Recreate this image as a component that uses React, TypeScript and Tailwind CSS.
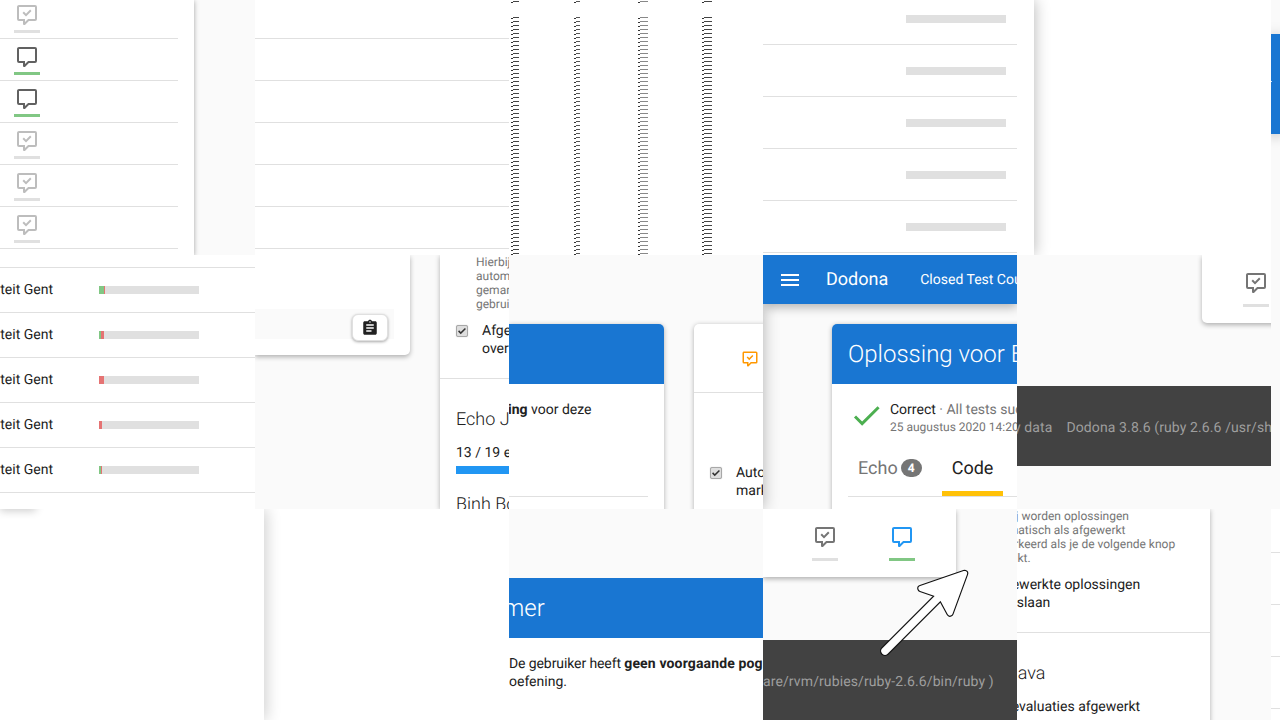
const checkPath =
  "M9,22A1,1 0 0,1 8,21V18H4A2,2 0 0,1 2,16V4C2,2.89 2.9,2 4,2H20A2,2 0 0,1 22,4V16A2,2 0 0,1 20,18H13.9L10.2,21.71C10,21.9 9.75,22 9.5,22V22H9M10,16V19.08L13.08,16H20V4H4V16H10M16.5,8L11,13.5L7.5,10L8.91,8.59L11,10.67L15.09,6.59L16.5,8Z";
const plainPath =
  "M9,22A1,1 0 0,1 8,21V18H4A2,2 0 0,1 2,16V4C2,2.89 2.9,2 4,2H20A2,2 0 0,1 22,4V16A2,2 0 0,1 20,18H13.9L10.2,21.71C10,21.9 9.75,22 9.5,22V22H9M10,16V19.08L13.08,16H20V4H4V16H10Z";

function CommentIcon({ done, className }: { done?: boolean; className: string }) {
  return (
    <svg viewBox="0 0 24 24" fill="currentColor" className={className}>
      <path d={done ? checkPath : plainPath} />
    </svg>
  );
}

function Checkbox() {
  return (
    <span className="flex h-3 w-3 shrink-0 items-center justify-center rounded-[2px] border border-[#a8a8a8] bg-[#dedede] shadow-[0_0_1px_rgba(0,0,0,0.3)]">
      <svg viewBox="0 0 24 24" fill="#333" className="h-[10px] w-[10px]">
        <path d="M9 19.5L2.5 13l2.6-2.6L9 14.3 18.9 4.5l2.6 2.6z" />
      </svg>
    </span>
  );
}

// crushed text from the reference, one mark every 4px
const squiggleRows = [1, ...Array.from({ length: 60 }, (_, i) => 17 + i * 4)];

function Squiggle({ w, tone }: { w: number; tone: string }) {
  return (
    <svg width={w} height={255} className="shrink-0">
      {squiggleRows.map((y) => (
        <g key={y}>
          <rect x={0} y={y + 1} width={2} height={1} fill="#333" />
          <rect x={2} y={y} width={w - 2} height={1} fill={tone} />
        </g>
      ))}
    </svg>
  );
}

const reviewRows = [false, true, true, false, false, false];
const scoreRows = [
  { green: 5, red: 1 },
  { green: 2, red: 3 },
  { green: 0, red: 5 },
  { green: 0, red: 3 },
  { green: 2.4, red: 0.6 },
];

function SettingsCard({ className }: { className: string }) {
  return (
    <div className={`h-[254px] w-[262px] shrink-0 bg-white whitespace-nowrap shadow-[0_1px_5px_rgba(0,0,0,0.3)] ${className}`}>
      <div className="pl-9 text-xs leading-[14px] text-[#757575]">
        <div>Hierbij worden oplossingen</div>
        <div>automatisch als afgewerkt</div>
        <div>gemarkeerd als je de volgende knop</div>
        <div>gebruikt.</div>
      </div>
      <div className="mt-[10px] flex h-[58px] gap-[14px] border-b border-[#e0e0e0] pl-4 text-sm leading-[18px] text-[#212121]">
        <div className="pt-1">
          <Checkbox />
        </div>
        <div className="pt-px">
          <div>Afgewerkte oplossingen</div>
          <div>overslaan</div>
        </div>
      </div>
      <div className="mt-[29px] pl-4 text-[18px] leading-6 font-light text-[#212121]">Echo Java</div>
      <div className="mt-3 pl-4 text-sm leading-[18px] text-[#212121]">13 / 19 evaluaties afgewerkt</div>
      <div className="mt-1 ml-4 h-2 w-[230px] bg-[#2196f3]" />
      <div className="mt-[19px] pl-4 text-[18px] leading-6 font-light text-[#212121]">Binh Bo</div>
    </div>
  );
}

function App() {
  return (
    <div className="grid h-[720px] w-[1280px] grid-cols-[255px_254px_254px_254px_254px_9px] grid-rows-[255px_254px_211px] overflow-hidden bg-white font-[Roboto,sans-serif] text-[#212121] [text-rendering:geometricPrecision]">
      {/* row 1 */}
      <div className="flex overflow-hidden bg-[#fafafa]">
        <div className="h-full w-[194px] bg-white shadow-[0_1px_5px_rgba(0,0,0,0.35)]">
          <div className="-mt-[3px] w-[178px]">
            {reviewRows.map((active, i) => (
              <div key={i} className="flex h-[42px] flex-col border-b border-[#e0e0e0] pt-[6px] pl-[14px]">
                <CommentIcon
                  done={!active}
                  className={`ml-[1px] h-6 w-6 ${active ? "text-[#616161]" : "text-[#bdbdbd]"}`}
                />
                <div className={`mt-[3px] h-[3px] w-[26px] ${active ? "bg-[#81c784]" : "bg-[#e0e0e0]"}`} />
              </div>
            ))}
          </div>
        </div>
      </div>

      <div className="overflow-hidden bg-white">
        <div className="-mt-[3px]">
          {reviewRows.map((_, i) => (
            <div key={i} className="h-[42px] border-b border-[#e0e0e0]" />
          ))}
        </div>
      </div>

      <div className="flex overflow-hidden bg-white pl-[2px]">
        <Squiggle w={8} tone="#444" />
        <div className="ml-[55px]">
          <Squiggle w={6} tone="#555" />
        </div>
        <div className="ml-[58px]">
          <Squiggle w={10} tone="#888" />
        </div>
        <div className="ml-[54px]">
          <Squiggle w={10} tone="#444" />
        </div>
      </div>

      <div className="overflow-hidden bg-white">
        <div className="-mt-[7px]">
          {[0, 1, 2, 3, 4].map((i) => (
            <div key={i} className="flex h-[52px] items-center border-b border-[#e0e0e0] pl-[143px]">
              <div className="h-2 w-[100px] bg-[#e0e0e0]" />
            </div>
          ))}
        </div>
      </div>

      <div className="flex overflow-hidden bg-white">
        <div className="relative z-10 h-full w-[17px] bg-white shadow-[0_0_16px_rgba(0,0,0,0.3)]" />
      </div>

      <div className="overflow-hidden bg-[#fafafa] pt-[34px]">
        <div className="h-[100px] bg-[#1976d2] pt-[47px] shadow-[0_2px_14px_rgba(0,0,0,0.35)]">
          <div className="h-px w-px bg-[#cfe0f5]" />
        </div>
      </div>

      {/* row 2 */}
      <div className="overflow-hidden bg-white text-sm">
        <div className="h-[13px] border-b border-[#e0e0e0]" />
        {[...scoreRows, null].map((row, i) => (
          <div key={i} className="flex h-[45px] items-center border-b border-[#e0e0e0]">
            <div className={`flex shrink-0 justify-end pb-px whitespace-nowrap ${row ? "w-[53px]" : "w-[15px]"}`}>
              {row ? "Universiteit Gent" : "Universiteit"}
            </div>
            {row && (
              <div className="ml-[46px] flex h-2 w-[100px] bg-[#e0e0e0]">
                <div className="bg-[#81c784]" style={{ width: row.green }} />
                <div className="bg-[#e57373]" style={{ width: row.red }} />
              </div>
            )}
          </div>
        ))}
      </div>

      <div className="flex overflow-hidden bg-[#fafafa]">
        <div className="h-[100px] w-[155px] shrink-0 rounded-br-[5px] bg-white pt-[54px] shadow-[0_2px_5px_rgba(0,0,0,0.3)]">
          <div className="h-[30px] w-[139px] bg-[#fafafa] pt-[5px] pl-[97px]">
            <div className="flex h-[27px] w-[36px] items-center justify-center rounded-md border border-[#e0e0e0] bg-white shadow-[0_1px_3px_rgba(0,0,0,0.35)]">
              <svg viewBox="0 0 24 24" fill="#212121" className="h-[18px] w-[18px]">
                <path d="M19 3h-4.18C14.4 1.84 13.3 1 12 1c-1.3 0-2.4.84-2.82 2H5c-1.1 0-2 .9-2 2v14c0 1.1.9 2 2 2h14c1.1 0 2-.9 2-2V5c0-1.1-.9-2-2-2zm-7 0c.55 0 1 .45 1 1s-.45 1-1 1-1-.45-1-1 .45-1 1-1zm2 14H7v-2h7v2zm3-4H7v-2h10v2zm0-4H7V7h10v2z" />
              </svg>
            </div>
          </div>
        </div>
        <SettingsCard className="ml-[30px]" />
      </div>

      <div className="flex overflow-hidden bg-[#fafafa] pt-[69px]">
        <div className="h-[200px] w-[155px] shrink-0 rounded-tr-[5px] bg-white shadow-[0_1px_5px_rgba(0,0,0,0.3)]">
          <div className="h-[60px] rounded-tr-[5px] bg-[#1976d2]" />
          <div className="-ml-px pt-[17px] text-sm leading-[18px]">
            <b className="font-bold">ing</b> voor deze
          </div>
          <div className="mt-[77px] w-[139px] border-b border-[#e0e0e0]" />
        </div>
        <div className="ml-[30px] h-[200px] w-[200px] shrink-0 rounded-t-[5px] bg-white shadow-[0_1px_5px_rgba(0,0,0,0.3)]">
          <div className="h-[69px] border-b border-[#e0e0e0] pt-[26px] pl-[47px]">
            <CommentIcon done className="h-[18px] w-[18px] text-[#ff9800]" />
          </div>
          <div className="mt-[70px] flex gap-[14px] pl-4 text-sm leading-[18px] whitespace-nowrap">
            <div className="pt-1">
              <Checkbox />
            </div>
            <div className="pt-px">
              <div>Automatisch</div>
              <div>markeren</div>
            </div>
          </div>
        </div>
      </div>

      <div className="relative flex flex-col overflow-hidden bg-[#fafafa]">
        <div className="relative z-10 flex h-[49px] shrink-0 items-center bg-[#1976d2] pl-[15px] whitespace-nowrap text-white shadow-[0_3px_10px_rgba(0,0,0,0.3)]">
          <svg viewBox="0 0 24 24" fill="currentColor" className="h-6 w-6 shrink-0">
            <path d="M3 18h18v-2H3v2zm0-5h18v-2H3v2zm0-7v2h18V6H3z" />
          </svg>
          <span className="ml-6 text-[18px]">Dodona</span>
          <span className="ml-8 text-sm">Closed Test Course</span>
        </div>
        <div className="flex min-h-0 flex-1">
          <div className="-ml-10 w-10 shrink-0 shadow-[0_0_16px_rgba(0,0,0,0.3)]" />
          <div className="mt-5 ml-[69px] h-[240px] w-[400px] shrink-0 rounded-t-[5px] bg-white shadow-[0_1px_5px_rgba(0,0,0,0.3)]">
            <div className="flex h-[60px] items-center rounded-t-[5px] bg-[#1976d2] pl-4 text-2xl font-light whitespace-nowrap text-white">
              Oplossing voor Echo
            </div>
            <div className="flex pt-[14px] pl-[17px] whitespace-nowrap">
              <svg viewBox="0 0 24 24" fill="#4caf50" className="h-[35px] w-[35px] shrink-0">
                <path d="M9 16.17L4.83 12l-1.42 1.41L9 19 21 7l-1.41-1.41z" />
              </svg>
              <div className="ml-[6px] pt-[3px]">
                <div className="text-sm leading-[18px]">
                  Correct <span className="text-[#757575]">· All tests succeeded</span>
                </div>
                <div className="text-xs leading-[17px] text-[#757575]">25 augustus 2020 14:20</div>
              </div>
            </div>
            <div className="mt-1 ml-4 flex h-[57px] border-b border-[#e0e0e0] text-[18px]">
              <div className="mr-[10px] flex flex-col px-[10px]">
                <div className="flex flex-1 items-center gap-[3px] pt-[5px] text-[#757575]">
                  Echo
                  <span className="flex h-[18px] w-[21px] items-center justify-center rounded-full bg-[#757575] text-xs font-bold text-white">
                    4
                  </span>
                </div>
                <div className="h-[5px]" />
              </div>
              <div className="flex flex-col">
                <div className="flex flex-1 items-center px-[10px] pt-[5px]">Code</div>
                <div className="h-[5px] bg-[#ffc107]" />
              </div>
            </div>
          </div>
        </div>
      </div>

      <div className="flex flex-col overflow-hidden bg-[#fafafa]">
        <div className="ml-[185px] h-[68px] w-[90px] shrink-0 rounded-bl-[5px] bg-white pt-4 pl-[41px] shadow-[0_2px_5px_rgba(0,0,0,0.3)]">
          <CommentIcon done className="ml-[1px] h-6 w-6 text-[#757575]" />
          <div className="mt-[9px] h-[3px] w-[26px] bg-[#e0e0e0]" />
        </div>
        <div className="mt-[63px] flex h-20 shrink-0 items-center bg-[#424242] pt-1 text-sm tracking-[0.11px] whitespace-nowrap text-[#9e9e9e]">
          <span className="-ml-[3px]">y data</span>
          <span className="ml-[14px]">Dodona 3.8.6 (ruby 2.6.6 /usr/share</span>
        </div>
      </div>

      <div className="overflow-hidden bg-[#fafafa]" />

      {/* row 3 */}
      <div className="overflow-hidden bg-white">
        <div className="-mt-5 h-5 w-9 shadow-[0_2px_8px_rgba(0,0,0,0.2)]" />
      </div>

      <div className="flex overflow-hidden bg-white">
        <div className="relative z-10 h-full w-[9px] bg-white shadow-[0_0_16px_rgba(0,0,0,0.3)]" />
      </div>

      <div className="flex flex-col overflow-hidden bg-white">
        <div className="h-[69px] shrink-0 bg-[#fafafa]" />
        <div className="flex h-[60px] shrink-0 items-center bg-[#1976d2] text-2xl font-light text-white">
          <span className="-ml-[6px]">mer</span>
        </div>
        <div className="pt-[17px] text-sm leading-[18px] whitespace-nowrap">
          <div>
            <span className="tracking-[-0.1px]">De gebruiker heeft </span>
            <b className="font-bold tracking-[0.14px]">geen voorgaande pogingen</b> voor deze
          </div>
          <div>oefening.</div>
        </div>
      </div>

      <div className="relative flex flex-col overflow-hidden bg-[#fafafa]">
        <div className="flex h-[68px] w-[193px] shrink-0 gap-[51px] rounded-br-[5px] bg-white pt-4 pl-[49px] shadow-[0_2px_5px_rgba(0,0,0,0.3)]">
          <div className="w-[26px]">
            <CommentIcon done className="ml-[1px] h-6 w-6 text-[#757575]" />
            <div className="mt-[9px] h-[3px] w-[26px] bg-[#e0e0e0]" />
          </div>
          <div className="w-[26px]">
            <CommentIcon className="ml-[1px] h-6 w-6 text-[#2196f3]" />
            <div className="mt-[9px] h-[3px] w-[26px] bg-[#81c784]" />
          </div>
        </div>
        <div className="mt-[63px] flex h-20 shrink-0 items-center bg-[#424242] pt-1 text-sm tracking-[0.11px] whitespace-nowrap text-[#9e9e9e]">
          are/rvm/rubies/ruby-2.6.6/bin/ruby )
        </div>
        {/* annotation arrow on top of the page */}
        <svg viewBox="875 559 100 110" className="absolute top-[50px] left-[112px] z-10 h-[110px] w-[100px]">
          <g strokeLinejoin="round" strokeLinecap="round">
            <path d="M885 651L938 598" stroke="#111" strokeWidth="10" fill="none" />
            <path d="M964.5 573.5L921 588.5L937 594L943 600L950 613Z" fill="#111" stroke="#111" strokeWidth="7.5" />
            <path d="M885 651L938 598" stroke="#fff" strokeWidth="7.5" fill="none" />
            <path d="M964.5 573.5L921 588.5L937 594L943 600L950 613Z" fill="#fff" stroke="#fff" strokeWidth="5.2" />
          </g>
        </svg>
      </div>

      <div className="flex overflow-hidden bg-[#fafafa]">
        <SettingsCard className="-ml-[69px]" />
      </div>

      <div className="overflow-hidden bg-white">
        <div className="h-[44px] border-b border-[#e0e0e0]" />
        {[0, 1, 2].map((i) => (
          <div key={i} className="h-[52px] border-b border-[#e0e0e0]" />
        ))}
      </div>
    </div>
  );
}

export default App;
